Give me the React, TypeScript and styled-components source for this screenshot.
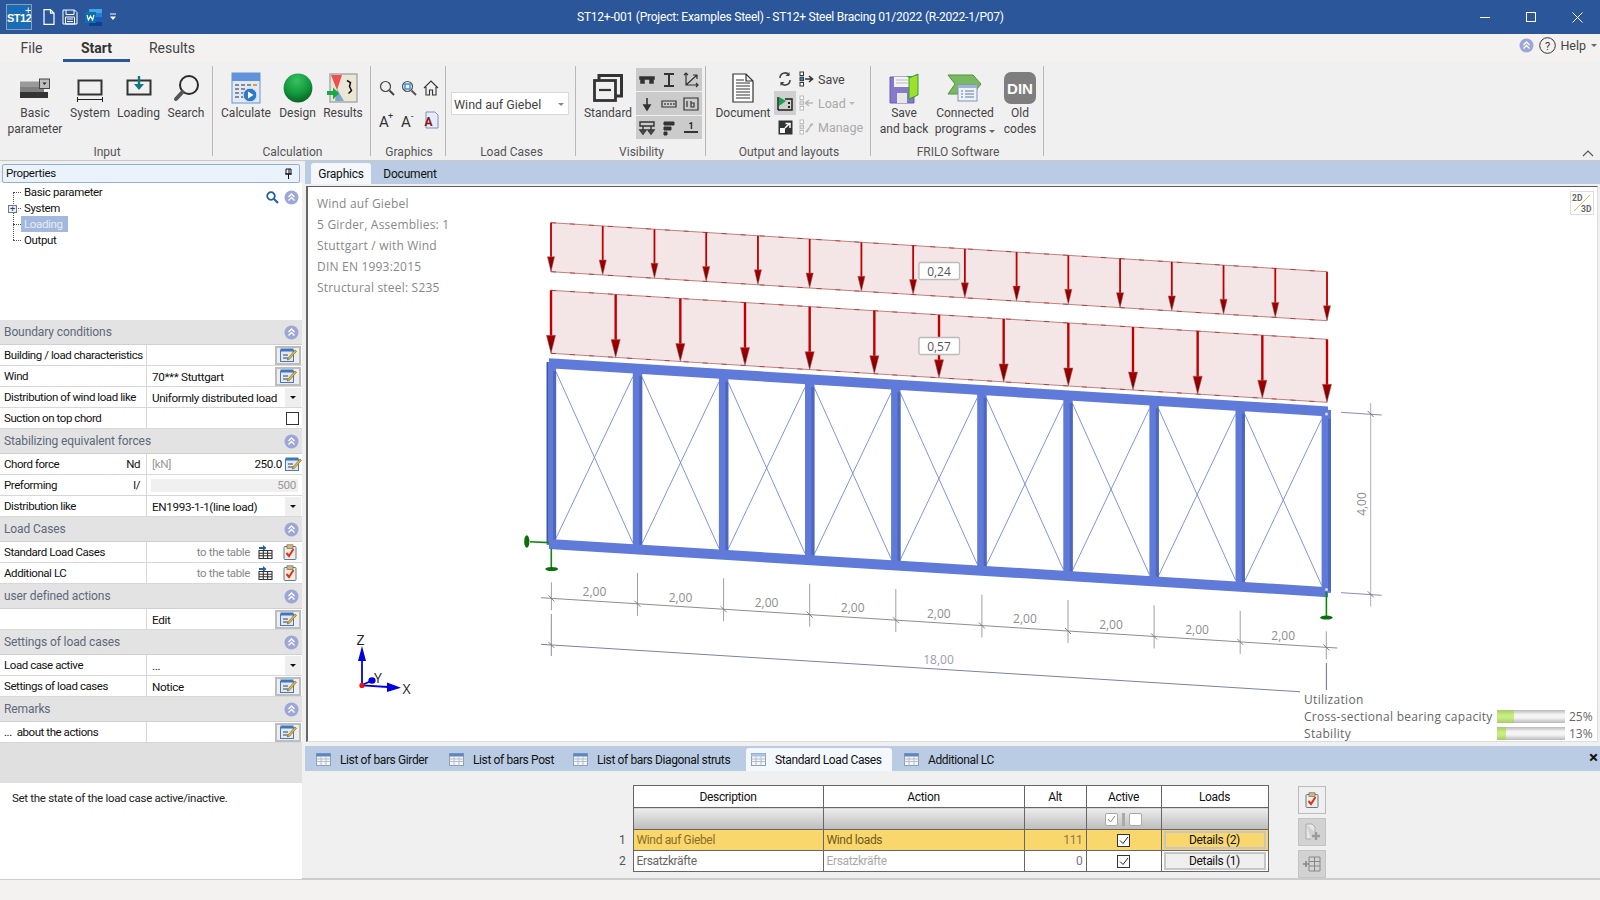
import React from "react";
import styled, { createGlobalStyle } from "styled-components";

const Global = createGlobalStyle`
  html, body { margin: 0; padding: 0; background: #f0f0f0; overflow: hidden; }
  * { box-sizing: border-box; }
  #root { width: 1600px; height: 900px; }
`;

const UI = `"Roboto", "Liberation Sans", sans-serif`;
const Page = styled.div`
  width: 1600px; height: 900px; display: flex; flex-direction: column;
  font-family: ${UI}; font-size: 12px; color: #222; background: #f0f0f0;
`;

/* ---------- Title bar ---------- */
const TitleBar = styled.div`display: flex; align-items: center; height: 34px; background: #2b579a; color: #fff; flex: none;`;
const Quick = styled.div`flex: 0 0 577px; display: flex; align-items: center; padding-left: 6px;`;
const Logo = styled.div`
  width: 26px; height: 26px; background: #1a6db5; border: 1px solid #8a9db5; color: #fff; position: relative;
  font: 700 11px/27px "Liberation Sans Narrow", "Liberation Sans", sans-serif; text-align: center; letter-spacing: -0.5px; white-space: nowrap; overflow: hidden;
`;
const LogoPlus = styled.span`position: absolute; right: 0; top: 0; font-size: 11px; font-weight: 400; line-height: 10px;`;
const QuickIcons = styled.div`display: flex; align-items: center; margin-left: 11px; gap: 7px;`;
const Title = styled.div`flex: 1; font-size: 12px; letter-spacing: -0.23px; white-space: nowrap;`;
const WinBtn = styled.div`width: 46px; height: 34px; display: flex; align-items: center; justify-content: center;`;

/* ---------- Tab row ---------- */
const TabRow = styled.div`display: flex; height: 28px; background: #f3f2f1; flex: none; align-items: stretch;`;
const MenuTab = styled.div<{ $w: number; $on?: boolean }>`
  width: ${p => p.$w}px; text-align: center; font-size: 14px; line-height: 28px; color: ${p => (p.$on ? "#333" : "#444")};
  font-weight: ${p => (p.$on ? 700 : 400)}; border-bottom: 3px solid ${p => (p.$on ? "#2b579a" : "transparent")};
`;
const HelpBox = styled.div`margin-left: auto; display: flex; align-items: center; gap: 5px; padding-right: 3px; padding-bottom: 6px; color: #444;`;
const HelpLabel = styled.span`margin-left: -1px; font-size: 12.5px;`;
const Caret = styled.span<{ $c?: string }>`
  display: inline-block; width: 0; height: 0; border-left: 3px solid transparent; border-right: 3px solid transparent;
  border-top: 3px solid ${p => p.$c || "#666"};
`;

/* ---------- Ribbon ---------- */
const Ribbon = styled.div`display: flex; height: 99px; padding-top: 4px; background: #f0f0f0; border-bottom: 1px solid #c8c8c8; flex: none; position: relative;`;
const Group = styled.div<{ $w: number }>`
  width: ${p => p.$w}px; height: 90px; border-right: 1px solid #b8b8b8; display: flex; flex-direction: column; flex: none;
`;
const GroupBody = styled.div<{ $pl?: number }>`flex: 1; display: flex; padding-left: ${p => p.$pl || 0}px; min-height: 0;`;
const GroupLabel = styled.div`height: 14px; line-height: 14px; margin-bottom: -3px; padding-left: 2px; text-align: center; color: #555; flex: none;`;
const Big = styled.div<{ $w: number; $off?: number }>`
  width: ${p => p.$w}px; display: flex; flex-direction: column; align-items: center; flex: none; padding-top: 6px; margin-left: ${p => p.$off || 0}px;
`;
const BigIcon = styled.div`height: 33px; flex: none; display: flex; align-items: flex-start; justify-content: center;`;
const BigText = styled.div`text-align: center; line-height: 16px; color: #444; white-space: nowrap;`;
const Collapse = styled.div`position: absolute; right: 6px; bottom: 3px; line-height: 0;`;
const SmallGrid = styled.div`display: grid; grid-template-columns: repeat(3, 22px); grid-auto-rows: 32px; margin-top: 6px; margin-left: 5px; justify-items: center; align-items: center;`;
const Combo = styled.div`
  margin: 26px 0 0 5px; width: 118px; height: 23px; background: #fff; border: 1px solid #d9d9d9; display: flex; align-items: center;
  justify-content: space-between; padding: 1px 4px 0 2px; color: #444; font-size: 12.5px;
`;
const VisGrid = styled.div`
  margin: 2px 0 0 -1px; width: 66px; height: 71px; display: grid; grid-template-columns: repeat(3, 22px);
  grid-template-rows: repeat(3, 1fr); gap: 1px 0; justify-items: center; align-items: center;
  background-image: linear-gradient(#cbcbcb 23px, #f0f0f0 23px, #f0f0f0 24px, #cbcbcb 24px, #cbcbcb 47px, #f0f0f0 47px, #f0f0f0 48px, #cbcbcb 48px);
`;
const ToolCol = styled.div`display: flex; flex-direction: column; margin-top: 1px; margin-left: -1px; width: 22px;`;
const ToolCell = styled.div<{ $on?: boolean }>`height: 24px; width: 22px; display: flex; align-items: center; justify-content: center; background: ${p => (p.$on ? "#cfcfcf" : "transparent")};`;
const ActCol = styled.div`display: flex; flex-direction: column; margin-top: 1px; margin-left: 3px;`;
const ActRow = styled.div<{ $off?: boolean }>`height: 24px; display: flex; align-items: center; gap: 3px; color: ${p => (p.$off ? "#aaa" : "#444")}; font-size: 12.5px; white-space: nowrap;`;

/* ---------- Body ---------- */
const Body = styled.div`flex: 1; display: flex; min-height: 0;`;
const Left = styled.div`width: 302px; display: flex; flex-direction: column; flex: none; padding-top: 3px; background: #f0f0f0;`;
const PropHead = styled.div`
  margin: 0 2px; height: 19px; background: #eaf3fc; border: 1px solid #8db0dc; border-radius: 2px; display: flex; align-items: center;
  justify-content: space-between; padding: 0 6px 1px 3px; color: #111; flex: none; font-size: 11.5px; letter-spacing: -0.3px;
`;
const Tree = styled.div`height: 137px; background: #fff; padding: 1px 0 0 8px; position: relative; flex: none; font-size: 11.5px; letter-spacing: -0.35px;
  &::before { content: ""; position: absolute; left: 13px; top: 9px; height: 48px; border-left: 1px dotted #555; }
`;
const TreeRow = styled.div`
  height: 16px; line-height: 16px; display: flex; align-items: center; position: relative;
  &::before { content: ""; width: 8px; margin-left: 5px; border-top: 1px dotted #555; flex: none; }
`;
const TreeText = styled.span<{ $sel?: boolean }>`
  padding: 0 3px; height: 16px; color: ${p => (p.$sel ? "#e4ecf7" : "#111")}; background: ${p => (p.$sel ? "#a3b8dc" : "transparent")};
  min-width: ${p => (p.$sel ? "47px" : "0")};
`;
const PlusBox = styled.span`
  position: absolute; left: 0; top: 5px; width: 9px; height: 8px; border: 1px solid #777; background: #e8eef8; color: #223a88;
  font-size: 9px; line-height: 6px; text-align: center; z-index: 1;
`;
const TreeTools = styled.div`position: absolute; right: 3px; top: 7px; display: flex; gap: 5px; align-items: center;`;
const GroupHead = styled.div`
  height: 25px; background: #e3e3e3; border-bottom: 1px solid #d0d0d0; display: flex; align-items: center; justify-content: space-between;
  padding: 0 3px 0 4px; color: #5d687c; font-weight: 400; font-size: 12px; letter-spacing: -0.1px; flex: none;
`;
const Row = styled.div`height: 21px; display: grid; grid-template-columns: 147px 1fr; background: #fff; border-bottom: 1px solid #d8d8d8; flex: none;`;
const RowLabel = styled.div`display: flex; align-items: center; justify-content: space-between; padding: 0 6px 1px 4px; border-right: 1px solid #d8d8d8; color: #111; white-space: nowrap; letter-spacing: -0.43px; font-size: 11.5px;`;
const RowValue = styled.div`display: flex; align-items: center; padding-left: 5px; color: #111; font-size: 11.7px; letter-spacing: -0.35px; position: relative;`;
const ValText = styled.span`margin-top: 2px;`;
const Grow = styled.span`flex: 1;`;
const Spacer = styled.span<{ $w: number }>`width: ${p => p.$w}px; flex: none;`;
const Unit = styled.span`color: #999;`;
const EditBtn = styled.div`width: 26px; height: 19px; background: #eee; border: 2px solid #bdbdbd; display: flex; align-items: center; justify-content: center; flex: none; margin-right: 1px;`;
const DropBtn = styled.div`width: 16px; height: 19px; background: #eee; display: flex; align-items: center; justify-content: center; flex: none; margin-right: 1px;`;
const Check = styled.div`width: 13px; height: 13px; border: 1px solid #333; background: #fff; margin-right: 3px; flex: none;`;
const Disabled = styled.div`flex: 1; margin: 0 4px 0 -1px; height: 13px; background: #f0f0f0; color: #999; text-align: right; line-height: 13px; padding-right: 2px;`;
const ToTable = styled.span`color: #888; margin-right: 8px; font-size: 11.5px;`;
const Filler = styled.div`height: 40px; background: #e0e0e0; flex: none;`;
const HelpText = styled.div`flex: 1; background: #fff; padding: 8px 12px; color: #222; font-size: 11.5px; letter-spacing: -0.3px;`;

const Right = styled.div`flex: 1; display: flex; flex-direction: column; min-width: 0;`;
const DocTabs = styled.div`height: 23px; margin-left: 3px; background: #b9cce4; display: flex; align-items: flex-end; padding-left: 6px; flex: none;`;
const DocTab = styled.div<{ $on?: boolean; $w: number }>`
  width: ${p => p.$w}px; height: 21px; line-height: 22px; text-align: center; border-radius: 3px 3px 0 0; color: #111; letter-spacing: -0.2px;
  background: ${p => (p.$on ? "#f4f8fc" : "transparent")};
`;
const Canvas = styled.div`
  position: relative; flex: 1; margin: 2px 2px 0 4px; background: #fff; border-top: 1px solid #5c5c5c; border-left: 2px solid #666;
  border-right: 1px solid #ddd; border-bottom: 1px solid #ddd; min-height: 0; overflow: hidden;
`;
const Drawing = styled.svg`position: absolute; left: -2px; top: -2px;`;
const Info = styled.div`position: relative; padding: 7px 0 0 9px; color: #888; font-family: "Open Sans", sans-serif; font-size: 12px; letter-spacing: 0.2px;`;
const InfoLine = styled.div`height: 20.9px; line-height: 20.9px;`;
const Toggle = styled.div`position: absolute; right: 3px; top: 4px;`;
const Util = styled.div`
  position: absolute; right: 0; bottom: -1px; width: 293px; background: #fff; font-family: "Open Sans", sans-serif; font-size: 12px; color: #666;
`;
const UtilRow = styled.div`height: 17px; display: flex; align-items: center; white-space: nowrap; letter-spacing: 0.3px;`;
const UtilName = styled.span`width: 193px; flex: none;`;
const Bar = styled.div`
  width: 68px; height: 13px; flex: none; position: relative;
  background: linear-gradient(#b9b9b9, #f4f4f4 35%, #f4f4f4 60%, #b9b9b9);
`;
const BarFill = styled.div`position: absolute; left: 0; top: 0; bottom: 0; background: linear-gradient(#a6cc6a, #c8ec80 40%, #c8ec80 60%, #a6cc6a);`;
const Pct = styled.span`margin-left: 4px; font-size: 12px; color: #666; letter-spacing: 0;`;

const Gap = styled.div`height: 4px; flex: none;`;
const BottomTabs = styled.div`height: 25px; margin-left: 3px; background: #b9cce4; display: flex; align-items: flex-end; flex: none; position: relative;`;
const BTab = styled.div<{ $on?: boolean; $w: number; $pl: number }>`
  width: ${p => p.$w}px; padding-left: ${p => p.$pl}px; height: 23px; display: flex; align-items: center; gap: 9px; white-space: nowrap; flex: none;
  color: #111; letter-spacing: -0.38px; background: ${p => (p.$on ? "#f4f8fc" : "transparent")}; border-radius: 3px 3px 0 0;
`;
const CloseX = styled.div`position: absolute; right: 2px; top: 3px; font-size: 17px; line-height: 17px; color: #111; font-weight: 700;`;
const TablePanel = styled.div`height: 108px; display: flex; padding: 14px 0 0 311px; background: #f0f0f0; border-bottom: 1px solid #ccc; overflow: hidden; flex: none;`;
const Grid = styled.table`
  border-collapse: collapse; table-layout: fixed; width: 655px; height: 86px; flex: none; letter-spacing: -0.35px; font-size: 12px;
  td { border: 1px solid #666; padding: 0 3px; height: 21px; overflow: hidden; white-space: nowrap; }
`;
const NumCell = styled.td`&& { border: none; text-align: right; padding-right: 7px; color: #555; width: 20px; }`;
const HeadCell = styled.td`background: #fff; text-align: center; color: #111; && { height: 22px; }`;
const FilterCell = styled.td`background: linear-gradient(#ededed, #bcbcbc); && { height: 22px; text-align: center; padding: 0; }`;
const DataCell = styled.td<{ $sel?: boolean; $tone?: string; $al?: string }>`
  background: ${p => (p.$sel ? "#fad76c" : "#fff")}; color: ${p => p.$tone || "#666"}; text-align: ${p => p.$al || "left"};
`;
const DetailBtn = styled.div<{ $sel?: boolean }>`
  margin: 0 -1px; height: 18px; line-height: 14px; text-align: center; color: #111; background: ${p => (p.$sel ? "#fad76c" : "#efefef")};
  border: 2px solid #c6c6c6;
`;
const MiniChk = styled.span<{ $dim?: boolean }>`
  display: inline-flex; align-items: center; justify-content: center; width: 13px; height: 13px; background: #fff; vertical-align: middle;
  border: 1px solid ${p => (p.$dim ? "#aaa" : "#333")}; border-radius: ${p => (p.$dim ? "2px" : "0")};
`;
const MiniSep = styled.span`display: inline-block; width: 3px; height: 13px; background: #aaa; margin: 0 4px; vertical-align: middle;`;
const SideBtns = styled.div`display: flex; flex-direction: column; gap: 4px; margin: 1px 0 0 29px; flex: none;`;
const SideBtn = styled.div<{ $off?: boolean }>`
  width: 28px; height: 28px; border: 1px solid ${p => (p.$off ? "#c4c4c4" : "#bbb")}; background: ${p => (p.$off ? "#d2d2d2" : "#efefef")};
  display: flex; align-items: center; justify-content: center;
`;
const Status = styled.div`height: 21px; background: #f3f2f1; border-top: 1px solid #ccc; flex: none;`;

/* ---------- Icons ---------- */
const ChevCircle = () => (
  <svg width="15" height="15" viewBox="0 0 15 15">
    <circle cx="7.5" cy="7.5" r="7" fill="#9da6d6" />
    <path d="M4.5 7 7.5 4 10.5 7M4.5 10.5 7.5 7.5 10.5 10.5" fill="none" stroke="#fff" strokeWidth="1.3" />
  </svg>
);
const EditIcon = () => (
  <svg width="17" height="14" viewBox="0 0 17 14">
    <rect x="0.5" y="2.5" width="13" height="11" fill="#dfe9f8" stroke="#4a78b8" />
    <rect x="0.5" y="0.5" width="13" height="3" fill="#3f76c0" />
    <path d="M3 7h5M3 10h5" stroke="#444" />
    <path d="M8 10 15 2l1.5 1.3-7 8-2.2.7z" fill="#e9b93f" stroke="#6a5a20" strokeWidth=".6" />
  </svg>
);
const TableGo = () => (
  <svg width="15" height="14" viewBox="0 0 15 14">
    <path d="M1 2h4V0l3.5 3L5 6V4H1z" fill="#1f5fa8" />
    <path d="M1 5.5h13V13.5H1zM1 8.2h13M1 10.8h13M5.3 5.5v8M9.6 5.5v8" fill="none" stroke="#333" strokeWidth="1.1" />
  </svg>
);
const ClipCheck = () => (
  <svg width="14" height="16" viewBox="0 0 14 16">
    <rect x="1" y="2.5" width="12" height="13" rx="1" fill="#f4edda" stroke="#5a7aa8" />
    <rect x="4" y="0.8" width="6" height="3.5" fill="#cdb98a" stroke="#6b5a30" strokeWidth=".6" />
    <path d="M3.5 9 6 12l4.5-7" fill="none" stroke="#d8332a" strokeWidth="2" />
  </svg>
);
const TabGrid = ({ on }: { on?: boolean }) => (
  <svg width="15" height="13" viewBox="0 0 15 13">
    <rect x=".5" y=".5" width="14" height="12" fill="#f3f6fa" stroke="#8aa0bc" />
    <rect x=".5" y=".5" width="14" height="3" fill={on ? "#a8c4e8" : "#5c86c0"} />
    <path d="M.5 6h14M.5 8.5h14M5 3.5v9M10 3.5v9" stroke="#b8bcc6" />
  </svg>
);
const Mag = ({ c = "#444" }: { c?: string }) => (
  <svg width="16" height="16" viewBox="0 0 16 16">
    <circle cx="6.5" cy="6.5" r="5" fill="none" stroke={c} strokeWidth="1.2" />
    <path d="M10.5 10.5 15 15" stroke={c} strokeWidth="2" />
  </svg>
);
const SmallIcon: React.FC<{ d: string; w?: number; fill?: boolean }> = ({ d, w = 1.8, fill }) => (
  <svg width="18" height="18" viewBox="0 0 18 18">
    <path d={d} fill={fill ? "#333" : "none"} stroke="#333" strokeWidth={w} />
  </svg>
);
const ListArrow: React.FC<{ dir: "r" | "l" | "t"; off?: boolean }> = ({ dir, off }) => {
  const c = off ? "#b8b8b8" : "#333";
  return (
    <svg width="16" height="16" viewBox="0 0 16 16">
      <rect x="1" y="1" width="3.5" height="3.5" fill="#fff" stroke={off ? "#bbb" : "#333"} />
      <rect x="1" y="6.2" width="3.5" height="3.5" fill={off ? "#ddd" : "#2e8fd0"} stroke={off ? "#bbb" : "#333"} />
      <rect x="1" y="11.5" width="3.5" height="3.5" fill="#fff" stroke={off ? "#bbb" : "#333"} />
      {dir === "r" && <path d="M6 8h7M10 5l3.5 3-3.5 3" fill="none" stroke={c} strokeWidth="1.6" />}
      {dir === "l" && <path d="M14 8H7M10 5 6.5 8l3.5 3" fill="none" stroke={c} strokeWidth="1.6" />}
      {dir === "t" && <path d="M6 13l4-5 1.5-3.5 3 0-1 2-2 1.5-3 5.5z" fill={c} />}
    </svg>
  );
};
const Ico32: React.FC<{ children: React.ReactNode; w?: number }> = ({ children, w = 32 }) => (
  <svg width={w} height="32" viewBox={`0 0 ${w} 32`}>{children}</svg>
);

/* ---------- Drawing helpers ---------- */
const posts = Array.from({ length: 10 }, (_, i) => 551.4 + i * 86.1);
const BLUE = "#5f7ad8";

const Head = ({ x, y, l, w }: { x: number; y: number; l: number; w: number }) => (
  <path d={`M${x - w} ${y - l}H${x + w}L${x} ${y}Z`} fill="url(#headGrad)" stroke="#a06a6a" strokeWidth=".5" />
);
const LoadBand = ({ y1, y2, n, sw, l, w }: { y1: number; y2: number; n: number; sw: number; l: number; w: number }) => {
  const b = 49 / 776;
  const step = 776 / n;
  return (
    <g>
      <path d={`M551 ${y1}L1327 ${y1 + 49}V${y2 + 49}L551 ${y2}Z`} fill="#f4e6e6" stroke="#c08080" strokeWidth="1" />
      <path d={`M551 ${y1}L1327 ${y1 + 49}M551 ${y2}L1327 ${y2 + 49}`} stroke="#b01818" strokeWidth=".7" strokeDasharray="5 14" />
      {Array.from({ length: n + 1 }, (_, i) => {
        const x = 551 + i * step;
        const t = y1 + b * (x - 551);
        const e = y2 + b * (x - 551);
        return (
          <g key={i}>
            <line x1={x} y1={t} x2={x} y2={e - l + 1} stroke="#c00000" strokeWidth={sw} />
            <Head x={x} y={e} l={l} w={w} />
          </g>
        );
      })}
    </g>
  );
};
const ValueTag = ({ y, t }: { y: number; t: string }) => (
  <g>
    <rect x="919" y={y} width="40.5" height="17" rx="1.5" fill="#fff" stroke="#bbb" strokeWidth="1.3" />
    <text x="939" y={y + 13} textAnchor="middle" fontFamily='"Open Sans", sans-serif' fontSize="12" fill="#555">{t}</text>
  </g>
);
const tick = (x: number, y: number, c: string) => <path d={`M${x - 3} ${y - 3}L${x + 3} ${y + 3}`} stroke={c} strokeWidth=".8" />;

const Structure = () => {
  const chainY = (x: number) => 597.7 + 0.0632 * (x - 541);
  const totalY = (x: number) => 644.3 + 0.0625 * (x - 541);
  const s = 0.0618;
  const chord = (t: number) => `M549 ${t}L1328 ${t + 779 * s}V${t + 779 * s + 10}L549 ${t + 10}Z`;
  return (
    <Drawing width="1291" height="554" viewBox="306 185 1291 554">
      <defs>
        <linearGradient id="headGrad" x1="0" x2="0" y1="0" y2="1">
          <stop offset="0" stopColor="#a80000" />
          <stop offset="1" stopColor="#6a0000" />
        </linearGradient>
      </defs>
      <LoadBand y1={222.7} y2={271.7} n={15} sw={1.8} l={15} w={3.6} />
      <LoadBand y1={290.3} y2={353.3} n={12} sw={2.4} l={18} w={4.6} />
      <ValueTag y={262.5} t="0,24" />
      <ValueTag y={337.5} t="0,57" />

      {posts.slice(0, 9).map((x, i) => {
        const a = x + 4.7, c = posts[i + 1] - 4.7;
        const top = (v: number) => 372 + s * (v - 556);
        const bot = (v: number) => 538 + s * (v - 556);
        return (
          <g key={i} stroke="#7288d8" strokeWidth=".9">
            <line x1={a} y1={top(a)} x2={c} y2={bot(c)} />
            <line x1={c} y1={top(c)} x2={a} y2={bot(a)} />
          </g>
        );
      })}
      {posts.map((x, i) => {
        const t = 362 + s * (x - 551);
        const h = 183;
        return (
          <g key={i}>
            <rect x={x - 4.7} y={t} width="9.4" height={h} fill={BLUE} />
            <rect x={x + 1.7} y={t + 9} width="3" height={h - 11} fill="#4f66bd" />
          </g>
        );
      })}
      <rect x="546.7" y="362" width="1.2" height="180" fill="#3d4f99" />
      <path d={chord(358.3)} fill={BLUE} />
      <path d={chord(539)} fill={BLUE} />
      <circle cx="1326.5" cy="414" r="1.6" fill="#cdd6f2" />
      <circle cx="1326.5" cy="589.5" r="1.6" fill="#cdd6f2" />

      {/* supports */}
      <g stroke="#0c8a0c" strokeWidth="1.6" fill="#0b6e0b">
        <line x1="530" y1="541.7" x2="549" y2="542.6" />
        <ellipse cx="526.8" cy="541.5" rx="2.6" ry="6.2" stroke="none" />
        <line x1="551.3" y1="549" x2="551.3" y2="568" />
        <ellipse cx="551.7" cy="569" rx="6.4" ry="2" stroke="none" />
        <line x1="1326.4" y1="592" x2="1326.4" y2="617" />
        <ellipse cx="1326.4" cy="617.6" rx="6.4" ry="2" stroke="none" />
      </g>

      {/* chain dimension */}
      <line x1="541" y1={chainY(541)} x2="1337.3" y2={chainY(1337.3)} stroke="#8d8d8d" />
      {posts.map((x, i) => {
        const y = chainY(x);
        return (
          <g key={i}>
            <line x1={x} y1={i === 0 || i === 9 ? y - 16 : y - 31} x2={x} y2={y + 12} stroke="#a0a0a0" />
            {tick(x, y, "#666")}
          </g>
        );
      })}
      {posts.slice(0, 9).map((x, i) => (
        <text key={i} x={x + 43} y={chainY(x + 43) - 5} textAnchor="middle" fontFamily='"Open Sans", sans-serif' fontSize="12" fill="#8e8e8e">2,00</text>
      ))}
      {/* total dimension */}
      <line x1="541" y1={totalY(541)} x2="1300" y2={totalY(1300)} stroke="#80809e" />
      <line x1="551.3" y1="614" x2="551.3" y2="656" stroke="#8d8d9d" />
      <line x1="1326.4" y1="663" x2="1326.4" y2="690" stroke="#6c6c90" />
      {tick(551.3, totalY(551.3), "#666")}
      <text x="938.5" y="664" textAnchor="middle" fontFamily='"Open Sans", sans-serif' fontSize="12" fill="#9c9cae">18,00</text>
      {/* height dimension */}
      <line x1="1370.7" y1="403" x2="1370.7" y2="606.7" stroke="#aeaec6" />
      <line x1="1341" y1="412.3" x2="1381.7" y2="415" stroke="#8d8da8" />
      <line x1="1341" y1="592.7" x2="1381.7" y2="595.3" stroke="#8d8da8" />
      {tick(1370.7, 414, "#555")}
      {tick(1370.7, 594.3, "#555")}
      <text transform="translate(1366 504) rotate(-90)" textAnchor="middle" fontFamily='"Open Sans", sans-serif' fontSize="12" fill="#8e8e8e">4,00</text>

      {/* axes */}
      <g stroke="#0000e0" fill="#0000e0">
        <line x1="362" y1="685" x2="362" y2="660" strokeWidth="1.8" />
        <path d="M358 661h8l-4-15z" stroke="none" />
        <line x1="362" y1="685.3" x2="388" y2="687" strokeWidth="1.8" />
        <path d="M387 682.5v9.5l14-4.3z" stroke="none" />
        <line x1="362" y1="685" x2="371" y2="681" strokeWidth="1.8" />
        <ellipse cx="372" cy="680.5" rx="3.6" ry="3.2" stroke="none" />
      </g>
      <circle cx="362" cy="685.4" r="2.6" fill="#f01010" />
      <g fontFamily='"Open Sans", sans-serif' fontSize="14" fill="#222">
        <text x="356.5" y="644.5">Z</text>
        <text x="374" y="682.5">Y</text>
        <text x="402.5" y="693.5">X</text>
      </g>
    </Drawing>
  );
};

/* ---------- Left panel data ---------- */
const Head1 = ({ t }: { t: string }) => (
  <GroupHead><span>{t}</span><ChevCircle /></GroupHead>
);

export default function App() {
  return (
    <Page>
      <Global />
      <TitleBar>
        <Quick>
          <Logo>ST12<LogoPlus>+</LogoPlus></Logo>
          <QuickIcons>
            <svg width="12" height="16" viewBox="0 0 12 16"><path d="M1 .7h6.5L11 4.2V15.3H1zM7.5 .7v3.5H11" fill="none" stroke="#fff" strokeWidth="1.2" /></svg>
            <svg width="16" height="16" viewBox="0 0 16 16"><path d="M1 1h11.5L15 3.5V15H1zM4 1v4.5h8V1M3.5 8h9v7h-9zM5 10h6M5 12.5h6" fill="none" stroke="#fff" strokeWidth="1" /></svg>
            <svg width="17" height="17" viewBox="0 0 17 17">
              <rect x="4" y="0" width="13" height="4" fill="#41a5ee" /><rect x="4" y="4" width="13" height="4.5" fill="#2b7cd3" />
              <rect x="4" y="8.5" width="13" height="4.5" fill="#185abd" /><rect x="4" y="13" width="13" height="4" fill="#103f91" />
              <rect x="0" y="3" width="11" height="11" fill="#0f6fa8" />
              <path d="M2 6l1.4 5L5.5 7l2 4L9 6" fill="none" stroke="#fff" strokeWidth="1.2" />
            </svg>
            <svg width="8" height="8" viewBox="0 0 8 8"><path d="M1 1h6" stroke="#fff" /><path d="M1 3.5h6L4 7z" fill="#fff" /></svg>
          </QuickIcons>
        </Quick>
        <Title>ST12+-001 (Project: Examples Steel) - ST12+ Steel Bracing 01/2022 (R-2022-1/P07)</Title>
        <WinBtn><svg width="10" height="10"><path d="M0 5.5h10" stroke="#fff" /></svg></WinBtn>
        <WinBtn><svg width="10" height="10"><rect x=".5" y=".5" width="9" height="9" fill="none" stroke="#fff" /></svg></WinBtn>
        <WinBtn><svg width="11" height="11"><path d="M.5.5l10 10M10.5.5l-10 10" stroke="#fff" /></svg></WinBtn>
      </TitleBar>

      <TabRow>
        <MenuTab $w={63}>File</MenuTab>
        <MenuTab $w={67} $on>Start</MenuTab>
        <MenuTab $w={84}>Results</MenuTab>
        <HelpBox>
          <ChevCircle />
          <svg width="17" height="17" viewBox="0 0 17 17"><circle cx="8.5" cy="8.5" r="7.8" fill="none" stroke="#333" /><text x="8.5" y="12.5" textAnchor="middle" fontSize="11" fill="#333">?</text></svg>
          <HelpLabel>Help</HelpLabel>
          <Caret />
        </HelpBox>
      </TabRow>

      <Ribbon>
        <Group $w={213}>
          <GroupBody $pl={4}>
            <Big $w={62}>
              <BigIcon><Ico32>
                <rect x="1" y="9.5" width="24" height="6" fill="#9a9a9a" /><rect x="1" y="15" width="24" height="5" fill="#7f7f7f" /><rect x="1" y="20" width="28" height="6" fill="#333" />
                <rect x="20.5" y="7" width="10" height="9.5" fill="#bdbdbd" stroke="#444" /><path d="M23.5 10.5h4l-2 2.5z" fill="#222" />
              </Ico32></BigIcon>
              <BigText>Basic<br />parameter</BigText>
            </Big>
            <Big $w={48}>
              <BigIcon><Ico32>
                <rect x="4.5" y="8.5" width="23" height="14" fill="none" stroke="#333" strokeWidth="2" />
                <path d="M3.5 27.5h25M3.5 25v5M28.5 25v5" stroke="#222" strokeWidth="1" fill="none" />
              </Ico32></BigIcon>
              <BigText>System</BigText>
            </Big>
            <Big $w={49}>
              <BigIcon><Ico32>
                <rect x="4.5" y="8.5" width="23" height="14" fill="none" stroke="#333" strokeWidth="2" />
                <path d="M16 4v10" stroke="#0f7a80" strokeWidth="2.4" /><path d="M11 12h10l-5 6z" fill="#0f7a80" />
              </Ico32></BigIcon>
              <BigText>Loading</BigText>
            </Big>
            <Big $w={46}>
              <BigIcon><Ico32>
                <circle cx="19" cy="13" r="9" fill="none" stroke="#2b2b2b" strokeWidth="2" />
                <path d="M12.5 20 6 27" stroke="#555" strokeWidth="4" strokeLinecap="round" />
              </Ico32></BigIcon>
              <BigText>Search</BigText>
            </Big>
          </GroupBody>
          <GroupLabel>Input</GroupLabel>
        </Group>

        <Group $w={158}>
          <GroupBody $pl={2}>
            <Big $w={62}>
              <BigIcon><Ico32>
                <rect x="2" y="1" width="28" height="30" fill="#dfe9f7" stroke="#6a93cc" />
                <rect x="2" y="1" width="28" height="8" fill="#5f93dc" />
                <path d="M5 13h4M11 13h4M17 13h4M5 17h4M11 17h4M5 21h4M11 21h4M5 25h4M11 25h4" stroke="#8a8a8a" strokeWidth="2" />
                <path d="M23 13h4" stroke="#e0a030" strokeWidth="2" />
                <circle cx="20" cy="23" r="6.8" fill="#2f79c6" stroke="#cfe0f5" />
                <path d="M18 19.5v7l5.5-3.5z" fill="#fff" />
              </Ico32></BigIcon>
              <BigText>Calculate</BigText>
            </Big>
            <Big $w={41}>
              <BigIcon><Ico32>
                <defs><radialGradient id="ball" cx=".45" cy=".25" r=".8"><stop offset="0" stopColor="#39c060" /><stop offset=".55" stopColor="#129a3e" /><stop offset="1" stopColor="#0a5c22" /></radialGradient></defs>
                <circle cx="16" cy="16" r="14.4" fill="url(#ball)" />
              </Ico32></BigIcon>
              <BigText>Design</BigText>
            </Big>
            <Big $w={50}>
              <BigIcon><Ico32>
                <rect x="3" y="2" width="27" height="28" fill="#ece6d4" stroke="#aaa" strokeWidth="1.5" />
                <path d="M4 3h11l-5 15z" fill="#ec5050" /><path d="M10 17l7 12H8z" fill="#7ea6cf" />
                <path d="M20 8.5l3.5 2-1 4 2 4-3 3" fill="none" stroke="#111" strokeWidth="1.5" />
                <path d="M0 19h6v-3.5l6 6-6 6V23H0z" fill="#19a84a" />
              </Ico32></BigIcon>
              <BigText>Results</BigText>
            </Big>
          </GroupBody>
          <GroupLabel>Calculation</GroupLabel>
        </Group>

        <Group $w={75}>
          <GroupBody>
            <SmallGrid>
              <Mag />
              <svg width="16" height="16" viewBox="0 0 16 16"><circle cx="6.5" cy="6.5" r="5" fill="none" stroke="#555" strokeWidth="1.2" /><rect x="4" y="4" width="5" height="5" fill="none" stroke="#2e8fd0" strokeWidth="1.4" /><path d="M10.5 10.5 15 15" stroke="#555" strokeWidth="2" /></svg>
              <svg width="16" height="16" viewBox="0 0 16 16"><path d="M1 8l7-7 7 7M3 7v8h3.5v-5h3v5H13V7" fill="none" stroke="#333" strokeWidth="1.1" /></svg>
              <svg width="20" height="22" viewBox="0 0 20 22"><text x="2" y="18" fontSize="15" fill="#333">A</text><text x="11" y="10" fontSize="9" fill="#333">+</text></svg>
              <svg width="20" height="22" viewBox="0 0 20 22"><text x="2" y="18" fontSize="15" fill="#333">A</text><text x="12" y="10" fontSize="9" fill="#333">-</text></svg>
              <svg width="18" height="20" viewBox="0 0 18 20"><path d="M4 2h9l3 3v13H4z" fill="#e6edf8" stroke="#7d94b8" /><text x="2.5" y="16" fontSize="12" fontWeight="700" fill="#8a1520">A</text></svg>
            </SmallGrid>
          </GroupBody>
          <GroupLabel>Graphics</GroupLabel>
        </Group>

        <Group $w={130}>
          <GroupBody>
            <Combo><span>Wind auf Giebel</span><Caret $c="#888" /></Combo>
          </GroupBody>
          <GroupLabel>Load Cases</GroupLabel>
        </Group>

        <Group $w={130}>
          <GroupBody $pl={3}>
            <Big $w={58}>
              <BigIcon><Ico32>
                <path d="M7 8V3.5h22.5V24H24" fill="none" stroke="#333" strokeWidth="3" />
                <rect x="2.5" y="8.5" width="21" height="20" fill="none" stroke="#333" strokeWidth="2.8" />
                <path d="M7 18h12" stroke="#333" strokeWidth="2.2" />
              </Ico32></BigIcon>
              <BigText>Standard</BigText>
            </Big>
            <VisGrid>
              <SmallIcon d="M2 6h14v2H2zM3 8v4h3V8M12 8v4h3V8" w={1.5} fill />
              <SmallIcon d="M4 3h10M4 15h10M9 3v12" w={2} />
              <SmallIcon d="M4 2v12h12M4 14 15 4M11 4h4v4M2 4l2-2 2 2M14 12l2 2-2 2" w={1.2} />
              <SmallIcon d="M9 3v9M6 10l3 5 3-5z" w={1.6} fill />
              <SmallIcon d="M2 6h14v6H2zM5 8v2M8 8v2M11 8v2M14 8v2" w={1.2} />
              <SmallIcon d="M2 3h14v12H2zM5 6v6M9 6v6h3V8H9" w={1.2} />
              <SmallIcon d="M2 3h14v4H2zM5 7v6M2 11l3 4 3-4zM13 7v6M10 11l3 4 3-4z" w={1.4} />
              <SmallIcon d="M4 3h10v3H4zM4 8h7v3H4zM4 13h3v3H4z" w={1} fill />
              <svg width="18" height="18" viewBox="0 0 18 18"><text x="9" y="10" textAnchor="middle" fontSize="9" fontWeight="700" fill="#222">1</text><path d="M2 13h14" stroke="#333" strokeWidth="2" /></svg>
            </VisGrid>
          </GroupBody>
          <GroupLabel>Visibility</GroupLabel>
        </Group>

        <Group $w={165}>
          <GroupBody $pl={5}>
            <Big $w={64}>
              <BigIcon><Ico32>
                <path d="M6 2h13l7 7v21H6zM19 2v7h7" fill="#fff" stroke="#333" strokeWidth="1.2" />
                <path d="M9 8h8M9 11h14M9 14h14M9 17h14M9 20h14M9 23h14M9 26h14" stroke="#333" strokeWidth="1" />
              </Ico32></BigIcon>
              <BigText>Document</BigText>
            </Big>
            <ToolCol>
              <ToolCell>
                <svg width="16" height="16" viewBox="0 0 16 16"><path d="M3 7a5 5 0 0 1 9-3M13 9a5 5 0 0 1-9 3" fill="none" stroke="#444" strokeWidth="1.6" /><path d="M12.5 1v4h-4zM3.5 15v-4h4z" fill="#444" /></svg>
              </ToolCell>
              <ToolCell $on>
                <svg width="16" height="15" viewBox="0 0 16 15"><path d="M1 1v13M1 14h14V3H8" fill="none" stroke="#222" strokeWidth="1.5" /><path d="M2 1l7 4-7 5z" fill="#16a34a" /><path d="M12 6v2M12 10v2" stroke="#222" strokeWidth="2" /></svg>
              </ToolCell>
              <ToolCell>
                <svg width="15" height="15" viewBox="0 0 15 15"><rect x=".5" y=".5" width="14" height="14" fill="#333" /><rect x="2" y="8" width="5" height="5" fill="#fff" /><path d="M7 8l4.5-4.5M7.5 3.5h4.5V8" fill="none" stroke="#fff" strokeWidth="1.5" /></svg>
              </ToolCell>
            </ToolCol>
            <ActCol>
              <ActRow><ListArrow dir="r" /><span>Save</span></ActRow>
              <ActRow $off><ListArrow dir="l" off /><span>Load</span><Caret $c="#bbb" /></ActRow>
              <ActRow $off><ListArrow dir="t" off /><span>Manage</span></ActRow>
            </ActCol>
          </GroupBody>
          <GroupLabel>Output and layouts</GroupLabel>
        </Group>

        <Group $w={173}>
          <GroupBody $pl={5}>
            <Big $w={56}>
              <BigIcon><Ico32>
                <path d="M2 5h24v26H2z" fill="#8579c8" stroke="#6a5db0" />
                <rect x="6" y="5" width="16" height="10" fill="#f4f4f4" /><path d="M8 8h12M8 11h12" stroke="#bbb" />
                <rect x="9" y="21" width="10" height="10" fill="#e6e6e6" />
                <path d="M21 6l9-4v21l-9 4z" fill="#9fe02a" stroke="#2f9e44" />
                <path d="M21 6l-3-2h10l2-2" fill="#2fa84f" />
              </Ico32></BigIcon>
              <BigText>Save<br />and back</BigText>
            </Big>
            <Big $w={66}>
              <BigIcon><Ico32 w={36}>
                <path d="M1 3h25l8 9-8 10H1l7-10z" fill="#7ab862" stroke="#4f9440" />
                <rect x="11" y="13" width="19" height="16" fill="#eef2f8" stroke="#7d94b8" />
                <rect x="11" y="13" width="19" height="3" fill="#9db6d8" />
                <path d="M14 19h2M18 19h9M14 22h2M18 22h9M14 25h2M18 25h9" stroke="#5a7aa8" />
              </Ico32></BigIcon>
              <BigText>Connected<br />programs <Caret /></BigText>
            </Big>
            <Big $w={44}>
              <BigIcon>
                <svg width="32" height="32" viewBox="0 0 32 32">
                  <rect width="32" height="32" rx="7" fill="#7e7e7e" />
                  <text x="16" y="22" textAnchor="middle" fontSize="15" fontWeight="700" fill="#fff" fontFamily='"Liberation Sans", sans-serif'>DIN</text>
                </svg>
              </BigIcon>
              <BigText>Old<br />codes</BigText>
            </Big>
          </GroupBody>
          <GroupLabel>FRILO Software</GroupLabel>
        </Group>
        <Collapse><svg width="12" height="7"><path d="M1 6l5-5 5 5" fill="none" stroke="#555" strokeWidth="1.1" /></svg></Collapse>
      </Ribbon>

      <Body>
        <Left>
          <PropHead>
            <span>Properties</span>
            <svg width="9" height="11" viewBox="0 0 9 11"><path d="M2 1h5v5H2zM1 6h7M4.5 6v5M5 1v5" fill="none" stroke="#111" strokeWidth="1" /></svg>
          </PropHead>
          <Tree>
            <TreeRow><TreeText>Basic parameter</TreeText></TreeRow>
            <TreeRow><PlusBox>+</PlusBox><TreeText>System</TreeText></TreeRow>
            <TreeRow><TreeText $sel>Loading</TreeText></TreeRow>
            <TreeRow><TreeText>Output</TreeText></TreeRow>
            <TreeTools>
              <svg width="13" height="13" viewBox="0 0 13 13"><circle cx="5" cy="5" r="3.8" fill="none" stroke="#1f5fa8" strokeWidth="1.8" /><path d="M8 8l4 4" stroke="#1f5fa8" strokeWidth="2.2" /></svg>
              <ChevCircle />
            </TreeTools>
          </Tree>

          <Head1 t="Boundary conditions" />
          <Row><RowLabel>Building / load characteristics</RowLabel><RowValue><Grow /><EditBtn><EditIcon /></EditBtn></RowValue></Row>
          <Row><RowLabel>Wind</RowLabel><RowValue><ValText>70*** Stuttgart</ValText><Grow /><EditBtn><EditIcon /></EditBtn></RowValue></Row>
          <Row><RowLabel>Distribution of wind load like</RowLabel><RowValue><ValText>Uniformly distributed load</ValText><Grow /><DropBtn><Caret $c="#111" /></DropBtn></RowValue></Row>
          <Row><RowLabel>Suction on top chord</RowLabel><RowValue><Grow /><Check /></RowValue></Row>

          <Head1 t="Stabilizing equivalent forces" />
          <Row><RowLabel><span>Chord force</span><span>Nd</span></RowLabel><RowValue><Unit>[kN]</Unit><Grow /><span>250.0</span><Spacer $w={3} /><EditIcon /></RowValue></Row>
          <Row><RowLabel><span>Preforming</span><span>l/</span></RowLabel><RowValue><Disabled>500</Disabled></RowValue></Row>
          <Row><RowLabel>Distribution like</RowLabel><RowValue><ValText>EN1993-1-1(line load)</ValText><Grow /><DropBtn><Caret $c="#111" /></DropBtn></RowValue></Row>

          <Head1 t="Load Cases" />
          <Row><RowLabel>Standard Load Cases</RowLabel><RowValue><Grow /><ToTable>to the table</ToTable><TableGo /><Spacer $w={10} /><ClipCheck /><Spacer $w={5} /></RowValue></Row>
          <Row><RowLabel>Additional LC</RowLabel><RowValue><Grow /><ToTable>to the table</ToTable><TableGo /><Spacer $w={10} /><ClipCheck /><Spacer $w={5} /></RowValue></Row>

          <Head1 t="user defined actions" />
          <Row><RowLabel /><RowValue><ValText>Edit</ValText><Grow /><EditBtn><EditIcon /></EditBtn></RowValue></Row>

          <Head1 t="Settings of load cases" />
          <Row><RowLabel>Load case active</RowLabel><RowValue><ValText>...</ValText><Grow /><DropBtn><Caret $c="#111" /></DropBtn></RowValue></Row>
          <Row><RowLabel>Settings of load cases</RowLabel><RowValue><ValText>Notice</ValText><Grow /><EditBtn><EditIcon /></EditBtn></RowValue></Row>

          <Head1 t="Remarks" />
          <Row><RowLabel>...&nbsp; about the actions</RowLabel><RowValue><Grow /><EditBtn><EditIcon /></EditBtn></RowValue></Row>
          <Filler />
          <HelpText>Set the state of the load case active/inactive.</HelpText>
        </Left>

        <Right>
          <DocTabs>
            <DocTab $w={60} $on>Graphics</DocTab>
            <DocTab $w={78}>Document</DocTab>
          </DocTabs>
          <Canvas>
            <Structure />
            <Info>
              <InfoLine>Wind auf Giebel</InfoLine>
              <InfoLine>5 Girder, Assemblies: 1</InfoLine>
              <InfoLine>Stuttgart / with Wind</InfoLine>
              <InfoLine>DIN EN 1993:2015</InfoLine>
              <InfoLine>Structural steel: S235</InfoLine>
            </Info>
            <Toggle>
              <svg width="24" height="24" viewBox="0 0 24 24">
                <rect x=".5" y=".5" width="23" height="23" fill="#fff" stroke="#ddd" />
                <path d="M20 4 4 20" stroke="#f0b060" />
                <text x="2" y="10" fontSize="8.5" fontWeight="700" fill="#666">2D</text>
                <text x="11" y="21" fontSize="8.5" fontWeight="700" fill="#666">3D</text>
              </svg>
            </Toggle>
            <Util>
              <UtilRow>Utilization</UtilRow>
              <UtilRow>
                <UtilName>Cross-sectional bearing capacity</UtilName>
                <Bar><BarFill style={{ width: "25%" }} /></Bar><Pct>25%</Pct>
              </UtilRow>
              <UtilRow>
                <UtilName>Stability</UtilName>
                <Bar><BarFill style={{ width: "13%" }} /></Bar><Pct>13%</Pct>
              </UtilRow>
            </Util>
          </Canvas>
          <Gap />
          <BottomTabs>
            <BTab $w={136} $pl={11}><TabGrid /><span>List of bars Girder</span></BTab>
            <BTab $w={124} $pl={8}><TabGrid /><span>List of bars Post</span></BTab>
            <BTab $w={181} $pl={8}><TabGrid /><span>List of bars Diagonal struts</span></BTab>
            <BTab $w={146} $pl={5} $on><TabGrid on /><span>Standard Load Cases</span></BTab>
            <BTab $w={110} $pl={12}><TabGrid /><span>Additional LC</span></BTab>
            <CloseX>×</CloseX>
          </BottomTabs>
          <TablePanel>
            <Grid>
              <colgroup><col width="20" /><col width="190" /><col width="201" /><col width="62" /><col width="75" /><col width="107" /></colgroup>
              <tbody>
                <tr><NumCell />
                  <HeadCell>Description</HeadCell><HeadCell>Action</HeadCell><HeadCell>Alt</HeadCell><HeadCell>Active</HeadCell><HeadCell>Loads</HeadCell></tr>
                <tr><NumCell /><FilterCell /><FilterCell /><FilterCell />
                  <FilterCell>
                    <MiniChk $dim><svg width="9" height="8"><path d="M1 4l2.5 3L8 1" fill="none" stroke="#888" /></svg></MiniChk><MiniSep /><MiniChk $dim />
                  </FilterCell><FilterCell /></tr>
                <tr><NumCell>1</NumCell>
                  <DataCell $sel $tone="#8a6d2a">Wind auf Giebel</DataCell>
                  <DataCell $sel $tone="#6e5a20">Wind loads</DataCell>
                  <DataCell $sel $tone="#8a7a4a" $al="right">111</DataCell>
                  <DataCell $sel $al="center"><MiniChk><svg width="10" height="9"><path d="M1 4.5l3 3L9 1" fill="none" stroke="#222" /></svg></MiniChk></DataCell>
                  <DataCell $sel><DetailBtn $sel>Details (2)</DetailBtn></DataCell></tr>
                <tr><NumCell>2</NumCell>
                  <DataCell>Ersatzkräfte</DataCell>
                  <DataCell $tone="#aaa">Ersatzkräfte</DataCell>
                  <DataCell $tone="#778" $al="right">0</DataCell>
                  <DataCell $al="center"><MiniChk><svg width="10" height="9"><path d="M1 4.5l3 3L9 1" fill="none" stroke="#222" /></svg></MiniChk></DataCell>
                  <DataCell><DetailBtn>Details (1)</DetailBtn></DataCell></tr>
              </tbody>
            </Grid>
            <SideBtns>
              <SideBtn><ClipCheck /></SideBtn>
              <SideBtn $off>
                <svg width="18" height="18" viewBox="0 0 18 18"><path d="M3 1h6l3 3v5M3 1v15h5" fill="#e8e8e8" stroke="#aaa" /><path d="M13 9v8M9 13h8" stroke="#9a9a9a" strokeWidth="2.4" /></svg>
              </SideBtn>
              <SideBtn $off>
                <svg width="18" height="18" viewBox="0 0 18 18"><path d="M6 2h11v14H6zM6 6.5h11M6 11h11M11.5 2v14" fill="none" stroke="#888" /><path d="M3 6v6M0 9h6" stroke="#888" strokeWidth="1.6" /></svg>
              </SideBtn>
            </SideBtns>
          </TablePanel>
        </Right>
      </Body>
      <Status />
    </Page>
  );
}
